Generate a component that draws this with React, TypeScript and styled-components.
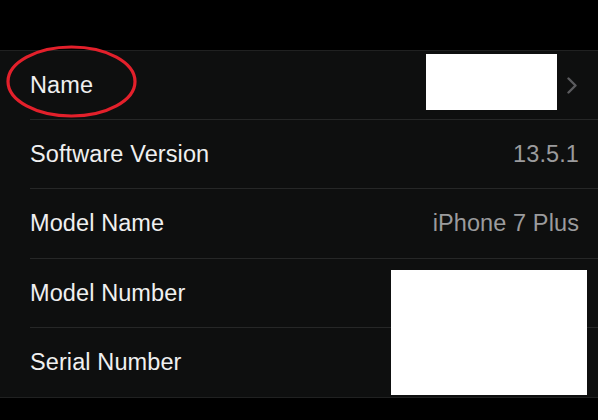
import { FC } from "react";
import styled, { createGlobalStyle } from "styled-components";

type Item = { label: string; value?: string; chevron?: boolean };

const items: Item[] = [
  { label: "Name", chevron: true },
  { label: "Software Version", value: "13.5.1" },
  { label: "Model Name", value: "iPhone 7 Plus" },
  { label: "Model Number" },
  { label: "Serial Number" },
];

const Chevron: FC = () => (
  <ChevronIcon viewBox="0 0 10 17" width="10" height="17">
    <path d="M1.5 1.5 L8.5 8.5 L1.5 15.5" fill="none" stroke="#5b5b5e" strokeWidth="2.4" strokeLinecap="round" strokeLinejoin="round" />
  </ChevronIcon>
);

export default function App() {
  return (
    <>
      <GlobalStyle />
      <Screen>
        <TopSpace />
        <Group>
          {items.map((item, i) => (
            <Row key={item.label}>
              <Content $last={i === items.length - 1}>
                <Label>{item.label}</Label>
                <Trailing>
                  {item.value && <Value>{item.value}</Value>}
                  {item.chevron && <Chevron />}
                </Trailing>
              </Content>
            </Row>
          ))}
        </Group>
        <Redaction $x={426} $y={54} $w={131} $h={56} />
        <Redaction $x={391} $y={270} $w={196} $h={125} />
        <Circle viewBox="0 0 140 80" width="140" height="80">
          <ellipse cx="69.5" cy="37.5" rx="63.5" ry="34.5" fill="none" stroke="#e3202b" strokeWidth="3.2" />
        </Circle>
      </Screen>
    </>
  );
}

const GlobalStyle = createGlobalStyle`
  html, body {
    margin: 0;
    padding: 0;
    background: #000;
  }
  body {
    font-family: "Liberation Sans", Arial, sans-serif;
  }
`;

const Screen = styled.div`
  position: relative;
  width: 598px;
  height: 420px;
  overflow: hidden;
  background: #000;
`;

const TopSpace = styled.div`
  height: 50px;
`;

const Group = styled.div`
  background: #0e0f0f;
  border-top: 1px solid #202121;
  border-bottom: 1px solid #202121;
`;

const Row = styled.div`
  padding-left: 30px;
`;

const Content = styled.div<{ $last: boolean }>`
  display: flex;
  align-items: center;
  justify-content: space-between;
  padding-right: 19px;
  border-bottom: ${(p) => (p.$last ? "none" : "1px solid #262727")};
  height: ${(p) => (p.$last ? "69.2px" : "68.2px")};
`;

const Label = styled.span`
  color: #f0f0f0;
  font-size: 23.5px;
  letter-spacing: 0.1px;
  padding-top: 1px;
`;

const Trailing = styled.div`
  display: flex;
  align-items: center;
`;

const Value = styled.span`
  color: #9b9b9d;
  font-size: 23.5px;
  letter-spacing: 0.1px;
  padding-top: 1px;
`;

const ChevronIcon = styled.svg`
  display: block;
  margin-right: 2px;
`;

const Redaction = styled.div<{ $x: number; $y: number; $w: number; $h: number }>`
  position: absolute;
  left: ${(p) => p.$x}px;
  top: ${(p) => p.$y}px;
  width: ${(p) => p.$w}px;
  height: ${(p) => p.$h}px;
  background: #fff;
`;

const Circle = styled.svg`
  position: absolute;
  left: 2px;
  top: 44px;
`;
